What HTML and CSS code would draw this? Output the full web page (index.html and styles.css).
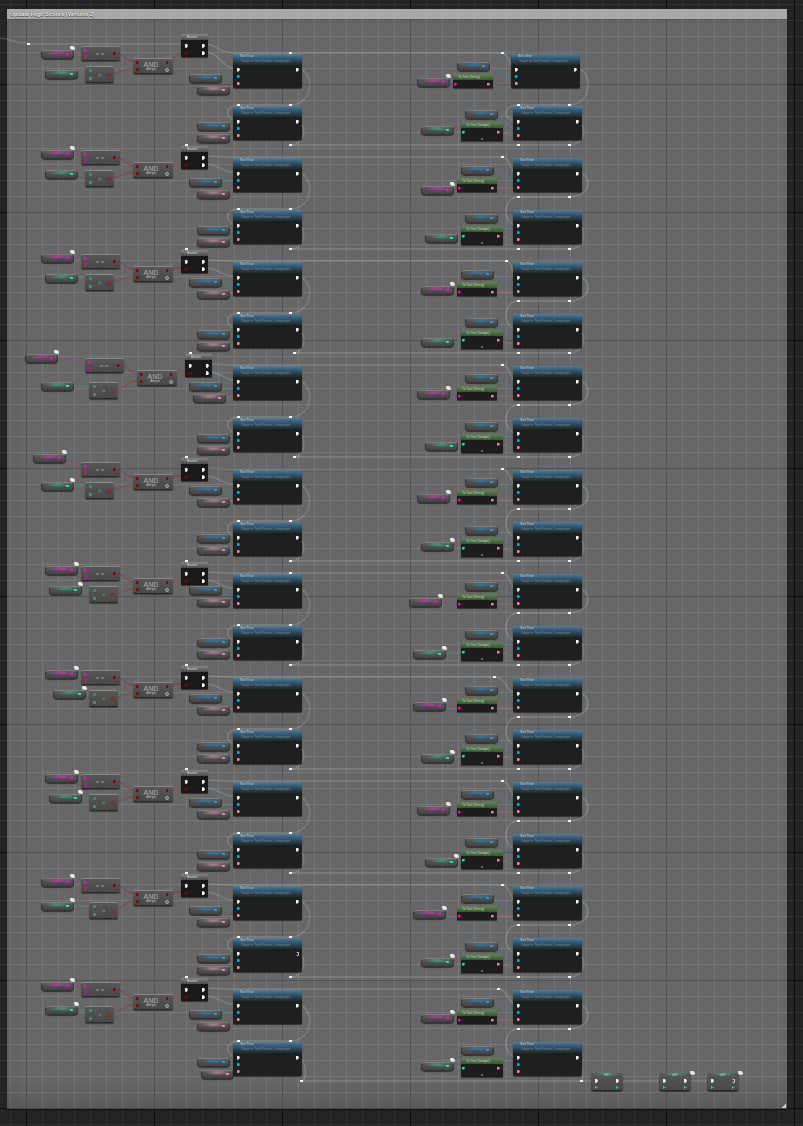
FILE: index.html
```html
<!DOCTYPE html>
<html lang="en">
<head>
<meta charset="utf-8">
<title>Update High Scores (Version 2)</title>
<link rel="stylesheet" href="styles.css">
</head>
<body>
<main class="canvas" id="canvas">
  <section class="comment">
    <h1 class="comment-title">Update High Scores (Version 2)</h1>
    <span class="resize"></span>
  </section>
  <svg class="wires" id="wires" width="803" height="1126" viewBox="0 0 803 1126" aria-hidden="true"></svg>
</main>
<script src="script.js"></script>
</body>
</html>
```
FILE: styles.css
```css
html, body { margin: 0; padding: 0; background: #242424; }
.canvas {
  position: relative; width: 803px; height: 1126px; overflow: hidden;
  font-family: "Liberation Sans", Arial, sans-serif;
  background-color: #242424;
  background-image:
    linear-gradient(#0f0f0f 1px, transparent 1px),
    linear-gradient(90deg, #0f0f0f 1px, transparent 1px),
    linear-gradient(#303030 1px, transparent 1px),
    linear-gradient(90deg, #303030 1px, transparent 1px);
  background-size: 128px 128px, 128px 128px, 16px 16px, 16px 16px;
  background-position: 0 84px, 26px 0, 0 4px, 10px 0;
}
.comment {
  position: absolute; left: 7px; top: 9px; width: 780px; height: 1100px;
  box-sizing: border-box; overflow: hidden;
  background-color: #676767;
  background-image:
    linear-gradient(90deg, rgba(0,0,0,.06), rgba(0,0,0,.02) 14px, transparent 20px),
    linear-gradient(transparent 1070px, rgba(0,0,0,.13)),
    linear-gradient(#535353 1px, transparent 1px),
    linear-gradient(90deg, #535353 1px, transparent 1px),
    linear-gradient(#777 1px, transparent 1px),
    linear-gradient(90deg, #777 1px, transparent 1px);
  background-size: 100% 100%, 100% 100%, 128px 128px, 128px 128px, 16px 16px, 16px 16px;
  background-position: 0 0, 0 0, 0 75px, 19px 0, 0 11px, 3px 0;
  box-shadow: 0 1px 1px #111;
}
.comment-title {
  margin: 0; height: 10px; box-sizing: border-box; padding: 1px 0 0 3px;
  background: #a9a9a9; color: #f2f2f2;
  font-size: 5.7px; font-weight: 700; line-height: 9px;
  text-shadow: 0 0 1px #333, 0 1px 0 #555;
  box-shadow: 0 2px 2px rgba(0,0,0,.18);
}
.resize {
  position: absolute; right: 1px; bottom: 1px; width: 5px; height: 5px;
  background: linear-gradient(135deg, transparent 50%, #cfcfcf 50%);
}
.wires { position: absolute; left: 0; top: 0; }
.wires path { fill: none; stroke-width: 1; }
.wires .exec { stroke: rgba(255,255,255,.17); stroke-width: 1.4; }
.wires .w-blue { stroke: rgba(0,170,240,.25); }
.wires .w-lpink { stroke: rgba(240,130,170,.26); }
.wires .w-mag { stroke: rgba(240,0,200,.24); }
.wires .w-teal { stroke: rgba(20,220,160,.24); }
.wires .w-red { stroke: rgba(170,20,20,.3); stroke-width: 1.3; }

.node { position: absolute; box-sizing: border-box; }
.reroute { position: absolute; width: 3px; height: 2px; background: #f4f4f4; }

.pill {
  position: absolute; width: 33px; height: 9px; box-sizing: border-box;
  border-radius: 4px; border: 1px solid #333;
  border-top-color: #7d7d7d;
  background:
    radial-gradient(ellipse 12px 3px at 50% 20%, var(--glow), transparent),
    linear-gradient(#5a5a5a, #434343);
  box-shadow: 0 1px 1px rgba(0,0,0,.5);
}
.pill::after {
  content: ""; position: absolute; right: 4px; top: 2px; width: 3px; height: 2px;
  background: var(--pin);
}
.pill-mag { --glow: rgba(215,50,190,.72); --pin: #ff00d0; }
.pill-teal { --glow: rgba(60,185,145,.68); --pin: #10e8a8; }
.pill-blue { --glow: rgba(30,135,200,.7); --pin: #00a8f0; }
.pill-pink { --glow: rgba(225,150,180,.68); --pin: #f07eaa; }
.badge {
  position: absolute; width: 4px; height: 3px; background: #e8e8e8;
  border-radius: 1px; box-shadow: 1px 1px 0 #cfd6e0;
}

.pin { display: block; flex: none; }
.pin-exec {
  width: 3px; height: 4px; background: #f2f2f2;
  clip-path: polygon(0 0, 60% 0, 100% 50%, 60% 100%, 0 100%);
}
.pin-hollow {
  width: 3px; height: 4px; box-sizing: border-box; border: 1px solid #e8e8e8;
  border-left-color: transparent; border-radius: 50%;
}
.pin-data { width: 3px; height: 3px; clip-path: polygon(0 0, 66% 0, 100% 50%, 66% 100%, 0 100%); }
.pin-blue { background: #00a4f0; }
.pin-pink { background: #f07aa8; }
.pin-mag { background: #ff00d0; }
.pin-teal { background: #10e8a8; }
.pin-red { background: #8a0000; }
.pin-dim { width: 3px; height: 3px; background: #3f8a72; }
.pin-box { width: 4px; height: 4px; box-sizing: border-box; border: 1px solid #8a2a26; background: #4a4a4a; }
.pin-ring { width: 3px; height: 3px; box-sizing: border-box; border: 1px solid #d0108c; border-left-color: transparent; border-radius: 50%; }

.row { display: flex; justify-content: space-between; align-items: center; }

.set {
  width: 69px; height: 34px; display: flex; flex-direction: column;
  background: #1e201e; border-radius: 1px 1px 2px 2px;
  box-shadow: 0 1px 1px rgba(0,0,0,.55);
}
.set-head {
  height: 11px; box-sizing: border-box; padding-left: 7px;
  background: linear-gradient(#4f82a8 0, #3f6a88 2px, #283c48 8px, #1f2a2e 11px);
  color: #aeb8be;
}
.set-title { display: block; font-size: 3.6px; line-height: 5px; font-weight: 700; }
.set-sub { display: block; font-size: 3.3px; line-height: 4px; margin-left: 1px; color: #7c8e98; white-space: nowrap; }
.set-body { flex: 1; display: flex; flex-direction: column; padding: 1px 3px 0 4px; }
.set-body .row { height: 7px; }

.branch {
  width: 27px; height: 23px; background: #191919; border-radius: 1px;
  box-shadow: 0 1px 1px rgba(0,0,0,.55); display: flex; flex-direction: column;
}
.branch-head {
  height: 6px; padding-left: 6px; font-size: 3.3px; line-height: 6px; color: #d4d4d4;
  background: linear-gradient(#858585, #4a4a4a);
}
.branch-body { display: flex; flex-direction: column; padding: 2px 3px 0 4px; }
.branch-body .row { height: 7.5px; }

.eq, .gt, .and {
  background: linear-gradient(#565656, #484848);
  border-radius: 2px; border-top: 1px solid #8a8a8a; border-bottom: 1px solid #2a2a2a;
  box-shadow: 0 1px 1px rgba(0,0,0,.4); color: #a0a0a0;
  display: flex; justify-content: space-between; align-items: center;
}
.eq { width: 39px; height: 15px; padding: 0 4px 0 3px; }
.gt { width: 29px; height: 17px; padding: 0 3px 0 4px; }
.and { width: 40px; height: 16px; padding: 0 4px 0 3px; }
.pins-col { display: flex; flex-direction: column; gap: 4px; }
.gt .pins-col { gap: 5px; }
.op { font-size: 6px; line-height: 6px; }
.and-mid { display: flex; flex-direction: column; align-items: center; margin-right: 2px; }
.and-word { font-size: 7px; line-height: 7px; color: #b4b4b4; }
.and-add { font-size: 2.8px; line-height: 3px; color: #ccc; }
.and-right { display: flex; flex-direction: column; align-items: center; gap: 4px; margin-top: 1px; }
.ring { width: 4px; height: 4px; box-sizing: border-box; border: 1px solid #a8a8a8; border-radius: 50%; background: #666; }

.totext {
  display: flex; flex-direction: column; background: #1c1e1c;
  box-shadow: 0 1px 1px rgba(0,0,0,.55); border-radius: 1px;
}
.tt-str { width: 40px; height: 14px; }
.tt-int { width: 42px; height: 19px; }
.tt-head {
  height: 6px; padding-left: 5px; font-size: 3.3px; line-height: 6px; color: #ccd6c6;
  background: linear-gradient(#608554, #3c5235); white-space: nowrap;
}
.tt-row { height: 8px; padding: 0 3px 0 1px; }
.tt-foot { width: 2px; height: 2px; background: #666; margin: 2px auto 0; }

.setvar {
  width: 32px; height: 18px; background:
    radial-gradient(ellipse 14px 4px at 50% 0, rgba(50,190,140,.7), transparent),
    linear-gradient(#565656, #484848);
  border-radius: 3px; border-bottom: 1px solid #2a2a2a; box-shadow: 0 1px 1px rgba(0,0,0,.5);
  padding: 1px 4px 0; color: #cfcfcf; display: flex; flex-direction: column;
}
.setvar-title { text-align: center; font-size: 3px; line-height: 3px; }
.setvar .row { height: 6px; margin-top: 1px; }
.setvar .row + .row { margin-top: 1px; }
.pin-diamond { width: 3px; height: 3px; background: #10d89a; clip-path: polygon(0 0, 33% 0, 33% 33%, 66% 33%, 100% 50%, 66% 66%, 33% 66%, 33% 100%, 0 100%); }
```
FILE: script.js
```js
var canvas = document.getElementById('canvas');
var svg = document.getElementById('wires');
var NS = 'http://www.w3.org/2000/svg';

function T(i) { return 54 + 52 * i; }

function wire(cls, d) {
  var p = document.createElementNS(NS, 'path');
  p.setAttribute('class', cls);
  p.setAttribute('d', d);
  svg.appendChild(p);
}
function bez(cls, x1, y1, x2, y2) {
  var dx = Math.max(Math.abs(x2 - x1) * 0.5, 6);
  wire(cls, 'M' + x1 + ' ' + y1 + 'C' + (x1 + dx) + ' ' + y1 + ' ' + (x2 - dx) + ' ' + y2 + ' ' + x2 + ' ' + y2);
}
function step(cls, x1, y1, x2, y2) {
  wire(cls, 'M' + x1 + ' ' + y1 + 'C' + (x1 + 14) + ' ' + y1 + ' ' + (x1 + 14) + ' ' + y2 + ' ' + (x1 + 30) + ' ' + y2 + 'L' + x2 + ' ' + y2);
}
function line(cls, x1, y1, x2, y2) { wire(cls, 'M' + x1 + ' ' + y1 + 'L' + x2 + ' ' + y2); }
function loopR(x, y, rx, ry, bulge) {
  wire('exec', 'M' + x + ' ' + y + 'C' + (x + bulge) + ' ' + y + ' ' + (x + bulge) + ' ' + ry + ' ' + rx + ' ' + ry);
}
function loopL(x, y, tx, ty, bulge) {
  wire('exec', 'M' + x + ' ' + y + 'C' + (x - bulge) + ' ' + y + ' ' + (x - bulge) + ' ' + ty + ' ' + tx + ' ' + ty);
}

function add(cls, x, y, html) {
  var el = document.createElement('div');
  el.className = cls;
  el.style.left = x + 'px';
  el.style.top = y + 'px';
  if (html) el.innerHTML = html;
  canvas.appendChild(el);
  return el;
}
function pin(c) { return '<i class="pin ' + c + '"></i>'; }
function reroute(x, y) { add('reroute', x, y); }
function pill(kind, x, y, badge) {
  add('pill pill-' + kind, x, y);
  if (badge) add('badge', x + 29, y - 4);
}
function setText(x, y, hollow) {
  add('node set', x, y,
    '<div class="set-head"><span class="set-title">Set Text</span><span class="set-sub">Target is Text Render Component</span></div>' +
    '<div class="set-body"><div class="row">' + pin('pin-exec') + pin(hollow ? 'pin-hollow' : 'pin-exec') + '</div>' +
    '<div class="row">' + pin('pin-data pin-blue') + '</div>' +
    '<div class="row">' + pin('pin-data pin-pink') + '</div></div>');
}
function branch(x, y) {
  add('node branch', x, y,
    '<div class="branch-head">Branch</div><div class="branch-body">' +
    '<div class="row">' + pin('pin-exec') + pin('pin-exec') + '</div>' +
    '<div class="row">' + pin('pin-data pin-red') + pin('pin-exec') + '</div></div>');
}
function eq(x, y) {
  add('node eq', x, y,
    '<div class="pins-col">' + pin('pin-data pin-mag') + pin('pin-ring') + '</div><span class="op">= =</span>' + pin('pin-data pin-red'));
}
function gt(x, y) {
  add('node gt', x, y,
    '<div class="pins-col">' + pin('pin-dim') + pin('pin-dim') + '</div><span class="op">&gt;</span>' + pin('pin-box'));
}
function and(x, y) {
  add('node and', x, y,
    '<div class="pins-col">' + pin('pin-data pin-red') + pin('pin-data pin-red') + '</div>' +
    '<div class="and-mid"><span class="and-word">AND</span><span class="and-add">Add pin</span></div>' +
    '<div class="and-right">' + pin('pin-data pin-red') + '<i class="ring"></i></div>');
}
function toText(kind, x, y) {
  var isStr = kind === 'str';
  add('node totext ' + (isStr ? 'tt-str' : 'tt-int'), x, y,
    '<div class="tt-head">To Text (' + (isStr ? 'String' : 'Integer') + ')</div>' +
    '<div class="row tt-row">' + pin(isStr ? 'pin-data pin-mag' : 'pin-data pin-teal') + pin('pin-data pin-pink') + '</div>' +
    (isStr ? '' : '<i class="tt-foot"></i>'));
}
function setVar(x, y, hollow) {
  add('node setvar', x, y,
    '<div class="setvar-title">SET</div><div class="row">' + pin('pin-exec') + pin(hollow ? 'pin-hollow' : 'pin-exec') + '</div>' +
    '<div class="row">' + pin('pin-diamond') + pin('pin-diamond') + '</div>');
}

/* Left column: branch groups. [pinkX,pinkY, tealX,tealY, eqX,eqY, gtX,gtY, andX,andY, brX,brY, tealBadge] */
var groups = {
  0: [41, 50, 45, 70, 81, 46, 85, 66, 133, 58, 181, 34, 0],
  2: [41, 150, 45, 170, 81, 150, 85, 170, 133, 162, 181, 146, 0],
  4: [41, 254, 45, 274, 81, 254, 85, 274, 133, 266, 181, 250, 0],
  6: [25, 354, 41, 382, 85, 358, 89, 382, 137, 370, 185, 354, 0],
  8: [33, 454, 41, 482, 81, 462, 85, 482, 133, 474, 181, 458, 1],
  10: [45, 566, 49, 586, 81, 566, 89, 586, 133, 578, 181, 562, 1],
  12: [45, 670, 53, 690, 81, 670, 89, 690, 133, 682, 181, 666, 1],
  14: [45, 774, 49, 794, 81, 774, 89, 794, 133, 786, 181, 770, 1],
  16: [41, 878, 41, 902, 81, 878, 89, 902, 133, 890, 181, 874, 1],
  18: [41, 982, 45, 1006, 81, 982, 85, 1006, 133, 994, 181, 978, 1]
};
/* Left column: pills feeding the Set Text nodes. [blueX,blueY,pinkX,pinkY] */
var leftPills = [
  [189, 74, 197, 86], [197, 122, 197, 134], [189, 178, 197, 190], [197, 226, 197, 238],
  [189, 278, 197, 290], [197, 330, 197, 342], [189, 382, 193, 394], [197, 434, 197, 446],
  [189, 486, 197, 498], [197, 534, 197, 546], [189, 586, 197, 598], [197, 638, 197, 650],
  [189, 694, 197, 706], [197, 742, 197, 754], [189, 798, 197, 810], [197, 850, 197, 862],
  [189, 906, 197, 918], [197, 954, 197, 966], [189, 1010, 197, 1022], [197, 1058, 201, 1070]
];
/* Right column: [blueX,blueY,varX,varY,toX,toY,varBadge] */
var rightPills = [
  [457, 62, 417, 78, 453, 74, 1], [465, 110, 421, 126, 461, 122, 0],
  [461, 166, 421, 186, 457, 178, 1], [465, 214, 425, 234, 461, 226, 0],
  [461, 270, 421, 286, 457, 282, 1], [465, 318, 421, 338, 461, 330, 0],
  [465, 374, 417, 390, 457, 386, 1], [465, 422, 425, 442, 461, 434, 0],
  [465, 478, 417, 494, 457, 490, 1], [465, 526, 421, 542, 461, 538, 1],
  [465, 582, 409, 598, 457, 594, 1], [465, 630, 413, 650, 461, 642, 1],
  [465, 686, 413, 702, 457, 698, 1], [465, 734, 421, 754, 461, 746, 1],
  [461, 790, 417, 806, 457, 802, 1], [465, 838, 425, 858, 461, 850, 1],
  [461, 894, 413, 910, 457, 906, 1], [465, 942, 421, 958, 461, 954, 1],
  [461, 998, 421, 1014, 457, 1010, 1], [461, 1046, 421, 1062, 461, 1058, 1]
];
var rightTops = { 0: [501, 52], 2: [501, 156], 4: [505, 260], 6: [501, 364], 8: [501, 468], 10: [501, 572], 12: [493, 676], 14: [501, 780], 16: [501, 884], 18: [497, 988] };
var bottomLeft = { 5: 293, 7: 293 };

/* Entry wire */
wire('exec', 'M0 38C10 39 16 43 28 43');
line('exec', 28, 44, 181, 44);
reroute(27, 43);

var i, g, t;
for (i = 0; i < 20; i++) {
  t = T(i);
  var rx = i === 0 ? 511 : 513;
  var lp = leftPills[i], rp = rightPills[i];
  var isStr = i % 2 === 0;

  /* left data wires */
  bez('w-blue', lp[0] + 28, lp[1] + 4, 238, t + 23);
  bez('w-lpink', lp[2] + 28, lp[3] + 4, 238, t + 30);
  /* right data wires */
  bez('w-blue', rp[0] + 28, rp[1] + 4, rx + 4, t + 23);
  var wx = rp[4] + (isStr ? 33 : 35), wy = rp[5] + 10;
  bez('w-lpink', wx, wy, rx + 4, t + 30);
  bez(isStr ? 'w-mag' : 'w-teal', rp[2] + 28, rp[3] + 4, rp[4] + 3, wy);

  if (isStr) {
    g = groups[i];
    bez('w-mag', g[0] + 28, g[1] + 4, g[4] + 3, g[5] + 4);
    bez('w-teal', g[2] + 28, g[3] + 4, g[6] + 4, g[7] + 4);
    bez('w-red', g[4] + 33, g[5] + 7, g[8] + 3, g[9] + 4);
    bez('w-red', g[6] + 24, g[7] + 8, g[8] + 3, g[9] + 10);
    bez('w-red', g[8] + 33, g[9] + 3, g[10] + 4, g[11] + 18);
    /* branch exec outputs */
    var R = rightTops[i];
    step('exec', g[10] + 23, g[11] + 10, R[0], R[1] + 1);
    bez('exec', R[0] + 2, R[1] + 1, rx + 4, t + 15);
    bez('exec', g[10] + 23, g[11] + 18, 238, t + 15);
    if (i > 0) {
      reroute(g[10] + 4, g[11] - 2);
      bez('exec', g[10] + 4, g[11] - 1, g[10] + 4, g[11] + 10);
    }
    /* left chain */
    var ly = t + 50;
    loopR(297, t + 15, 290, ly + 1, 18);
    line('exec', 290, ly + 1, 238, ly + 1);
    loopL(238, ly + 1, 238, T(i + 1) + 15, 14);
    /* right chain */
    var ry = i === 0 ? t + 50 : t + 38;
    loopR(577, t + 15, 569, ry + 1, 16);
    line('exec', 569, ry + 1, 518, ry + 1);
    loopL(518, ry + 1, 517, T(i + 1) + 15, 16);
  } else if (i < 19) {
    var bx = bottomLeft[i] || 290;
    loopR(297, t + 15, bx, t + 39, 10);
    loopR(577, t + 15, 569, t + 39, 10);
    line('exec', 569, t + 39, bx, t + 39);
  }
}
/* Final wires along the bottom */
wire('exec', 'M297 1057C306 1057 308 1081 302 1081');
loopR(577, 1057, 582, 1081, 6);
line('exec', 302, 1081, 596, 1081);
bez('exec', 620, 1081, 664, 1081);
bez('exec', 688, 1081, 712, 1081);

/* Nodes */
for (i = 0; i < 20; i++) {
  t = T(i);
  var lp2 = leftPills[i], rp2 = rightPills[i];
  pill('blue', lp2[0], lp2[1]);
  pill('pink', lp2[2], lp2[3]);
  setText(233, t, i === 17);

  var rx2 = i === 0 ? 511 : 513;
  pill('blue', rp2[0], rp2[1]);
  pill(i % 2 === 0 ? 'mag' : 'teal', rp2[2], rp2[3], rp2[6]);
  toText(i % 2 === 0 ? 'str' : 'int', rp2[4], rp2[5]);
  setText(rx2, t, false);

  if (i % 2 === 0) {
    g = groups[i];
    pill('mag', g[0], g[1], true);
    pill('teal', g[2], g[3], g[12]);
    eq(g[4], g[5]);
    gt(g[6], g[7]);
    and(g[8], g[9]);
    branch(g[10], g[11]);
  }
}

/* Reroute knots */
[[289, 52], [289, 572]].forEach(function (p) { reroute(p[0], p[1]); });
for (i = 0; i < 19; i++) {
  t = T(i);
  if (i % 2 === 0) {
    reroute(237, t + 50);
    reroute(289, t + 50);
  } else {
    reroute(bottomLeft[i] || 289, t + 38);
  }
  reroute(517, i === 0 ? t + 50 : t + 38);
  reroute(568, i === 0 ? t + 50 : t + 38);
}
Object.keys(rightTops).forEach(function (k) { reroute(rightTops[k][0], rightTops[k][1]); });
reroute(300, 1080);
reroute(580, 1080);

setVar(591, 1073, false);
setVar(659, 1073, false);
setVar(707, 1073, true);
add('badge', 690, 1071);
add('badge', 738, 1071);
```
